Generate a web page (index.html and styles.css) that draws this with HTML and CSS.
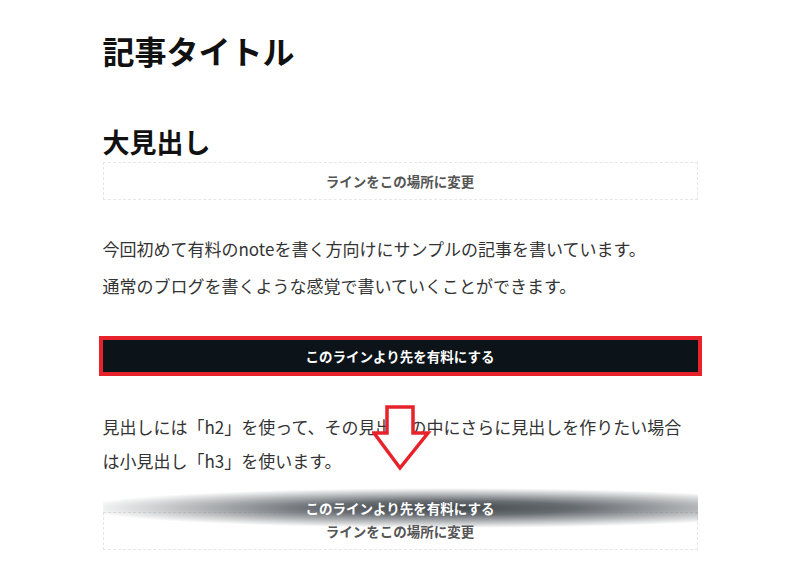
FILE: index.html
```html
<!DOCTYPE html>
<html lang="ja">
<head>
  <meta charset="UTF-8" />
  <meta name="viewport" content="width=device-width, initial-scale=1" />
  <title>記事タイトル</title>
  <link rel="stylesheet" href="styles.css">
</head>
<body>

  <main class="article">
    <h1 class="article-title">記事タイトル</h1>

    <h2 class="heading">大見出し</h2>
    <div class="line-slot">ラインをこの場所に変更</div>

    <p class="text">今回初めて有料のnoteを書く方向けにサンプルの記事を書いています。<br>通常のブログを書くような感覚で書いていくことができます。</p>

    <div class="paywall-line">このラインより先を有料にする</div>

    <div class="arrow-wrap">
      <p class="text">見出しには「h2」を使って、その見出しの中にさらに見出しを作りたい場合は小見出し「h3」を使います。</p>
      <svg class="arrow" width="60" height="66" viewBox="0 0 60 66">
        <path d="M15 2 H41 V28 H56 L28 63 L2 28 H15 Z" fill="#fff" stroke="#e8222b" stroke-width="3.5" stroke-linejoin="miter" />
      </svg>
    </div>

    <div class="preview">
      <div class="preview-band">このラインより先を有料にする</div>
      <div class="line-slot line-slot--under">ラインをこの場所に変更</div>
    </div>
  </main>

</body>
</html>
```

FILE: styles.css
```css
body {
  margin: 0;
  background: #fff;
  font-family: "Noto Sans CJK JP", "Noto Sans", sans-serif;
  color: #333;
}

.article {
  max-width: 595px;
  margin: 0 auto;
  padding-top: 28px;
}

.article-title {
  margin: 0;
  font-size: 32px;
  line-height: 44px;
  font-weight: bold;
  color: #111;
}

.heading {
  margin: 50px 0 0;
  font-size: 27px;
  line-height: 40px;
  font-weight: bold;
  color: #111;
}

.line-slot {
  height: 36px;
  border: 1px dashed #e6e6e6;
  display: flex;
  align-items: center;
  justify-content: center;
  font-size: 13.5px;
  font-weight: bold;
  color: #555;
}

.text {
  margin: 30px 0 0;
  font-size: 17px;
  line-height: 37px;
}

.paywall-line {
  margin: 32px -4px 0;
  height: 32px;
  border: 4px solid #e8222b;
  background: #0c141a;
  color: #fff;
  font-size: 13.5px;
  font-weight: bold;
  display: flex;
  align-items: center;
  justify-content: center;
}

.arrow-wrap {
  position: relative;
}

.arrow-wrap .text {
  margin-top: 34px;
  line-height: 34px;
}

.arrow {
  position: absolute;
  left: 269px;
  top: -5px;
}

.preview {
  margin-top: 10px;
}

.preview-band {
  position: relative;
  z-index: 1;
  height: 40px;
  display: flex;
  align-items: center;
  justify-content: center;
  color: #fff;
  font-size: 13.5px;
  font-weight: bold;
  background: radial-gradient(ellipse 62% 50% at 58% 50%, #44494e 0%, #676c71 35%, rgba(255, 255, 255, 0) 100%);
}

.line-slot--under {
  margin-top: -16px;
}
```
